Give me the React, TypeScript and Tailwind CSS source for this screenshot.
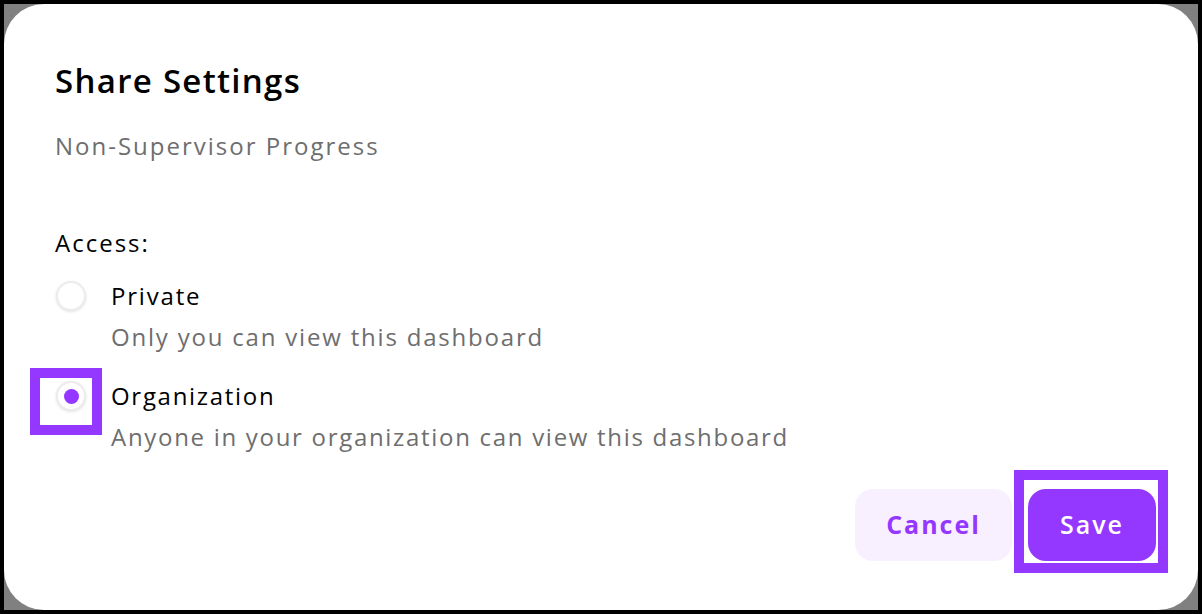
import React from "react";

function Radio({ checked }: { checked?: boolean }) {
  return (
    <div className="w-[30px] h-[30px] rounded-full border-2 border-[#ececec] bg-white shadow-[0_1px_3px_rgba(0,0,0,0.12)] flex items-center justify-center shrink-0">
      {checked && <div className="w-[15px] h-[15px] rounded-full bg-[#9538ff]" />}
    </div>
  );
}

export default function App() {
  return (
    <div
      className="w-[1202px] h-[614px] bg-black p-[4px] overflow-hidden"
      style={{ fontFamily: "'Open Sans', Lato, sans-serif" }}
    >
      <div className="relative h-full bg-[#808080]">
        <div className="relative h-full bg-white rounded-[40px] pl-[51px] pr-[42px] pt-[57px] flex flex-col">
          <h2 className="text-[33px] leading-[40px] font-semibold text-black tracking-[1.3px]">Share Settings</h2>
          <p className="mt-[29px] text-[24px] leading-[32px] text-[#6e6e6e] tracking-[2px]">Non-Supervisor Progress</p>
          <p className="mt-[65px] text-[24px] leading-[32px] text-black tracking-[2px]">Access:</p>

          <div className="mt-[21px] flex items-start gap-[25px]">
            <div className="h-[32px] flex items-center pl-[1px]">
              <Radio />
            </div>
            <div className="flex flex-col tracking-[1.8px]">
              <span className="text-[24px] leading-[32px] text-black">Private</span>
              <span className="mt-[9px] text-[24px] leading-[32px] text-[#6e6e6e]">Only you can view this dashboard</span>
            </div>
          </div>

          <div className="mt-[27px] flex items-start gap-[25px]">
            <div className="h-[32px] flex items-center pl-[1px]">
              <Radio checked />
            </div>
            <div className="flex flex-col tracking-[1.7px]">
              <span className="text-[24px] leading-[32px] text-black">Organization</span>
              <span className="mt-[9px] text-[24px] leading-[32px] text-[#6e6e6e]">Anyone in your organization can view this dashboard</span>
            </div>
          </div>

          <div className="mt-[36px] flex justify-end gap-[16px]">
            <button className="w-[157px] h-[72px] rounded-[18px] bg-[#f8efff] text-[#9538ff] text-[25px] font-bold tracking-[2px]">Cancel</button>
            <button className="w-[128px] h-[72px] rounded-[18px] bg-[#9538ff] text-white text-[25px] font-semibold tracking-[2px]">Save</button>
          </div>
        </div>

        <div className="absolute left-[26px] top-[364px] w-[72px] h-[67px] border-[10px] border-[#9538ff]" />
        <div className="absolute left-[1010px] top-[466px] w-[154px] h-[103px] border-[10px] border-[#9538ff]" />
      </div>
    </div>
  );
}
